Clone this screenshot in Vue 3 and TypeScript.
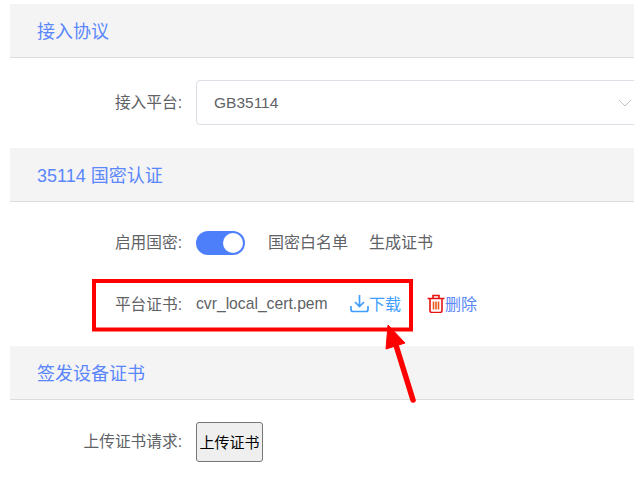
<script setup lang="ts">
const fontNote = 'cert form'
const enabled = true
</script>

<template>
  <div class="page" :data-name="fontNote">
    <section class="block">
      <h3 class="title">接入协议</h3>
      <div class="row first">
        <label class="label">接入平台:</label>
        <div class="select">
          <span class="value">GB35114</span>
          <svg class="chevron" width="14" height="8" viewBox="0 0 14 8">
            <path d="M1 1l6 6 6-6" fill="none" stroke="#c0c4cc" stroke-width="1" />
          </svg>
        </div>
      </div>
    </section>

    <section class="block">
      <h3 class="title">35114 国密认证</h3>
      <div class="row switch-row">
        <label class="label">启用国密:</label>
        <span class="switch" :class="{ on: enabled }"><i></i></span>
        <a class="plain white">国密白名单</a>
        <a class="plain">生成证书</a>
      </div>
      <div class="row cert-row">
        <label class="label">平台证书:</label>
        <span class="file">cvr_local_cert.pem</span>
        <a class="link download">
          <svg width="19" height="19" viewBox="0 0 19 19" fill="none" stroke="#409eff" stroke-width="1.7">
            <path d="M9.5 1v11M5 8l4.5 4.5L14 8" />
            <path d="M1 12v3.5a2 2 0 0 0 2 2h13a2 2 0 0 0 2-2V12" />
          </svg>下载
        </a>
        <a class="link remove">
          <svg width="18" height="19" viewBox="0 0 18 19" fill="none" stroke="#e5120f" stroke-width="1.6">
            <path d="M0.5 4.5h17M6 4.5V1.5h6v3" />
            <path d="M3 4.5v12a2 2 0 0 0 2 2h8a2 2 0 0 0 2-2v-12" />
            <path d="M6.5 7.5v8M9 7.5v8M11.5 7.5v8" stroke="#ea5a1e" />
          </svg>删除
        </a>
      </div>
    </section>

    <section class="block">
      <h3 class="title">签发设备证书</h3>
      <div class="row upload-row">
        <label class="label">上传证书请求:</label>
        <button class="upload" type="button">上传证书</button>
      </div>
    </section>

    <!-- red annotation drawn on top of the screenshot -->
    <svg class="annotation" width="634" height="493" viewBox="0 0 634 493">
      <rect x="94" y="281" width="317" height="48.5" fill="none" stroke="#ff0000" stroke-width="4" />
      <path d="M388 325L386 349L405 343Z" fill="#ff0000" stroke="#ff0000" stroke-width="1" stroke-linejoin="round" />
      <path d="M395 342L413 400" fill="none" stroke="#ff0000" stroke-width="5.5" stroke-linecap="round" />
    </svg>
  </div>
</template>

<style>
html,
body {
  margin: 0;
  overflow: hidden;
}
</style>

<style scoped>
.page {
  position: relative;
  width: 634px;
  height: 493px;
  overflow: hidden;
  box-sizing: border-box;
  padding: 4px 0 0 10px;
  background: #fff;
  font-family: "Liberation Sans", "Noto Sans CJK SC", sans-serif;
  font-size: 15px;
  color: #606266;
}
.block {
  margin: 0;
}
.title {
  margin: 0;
  height: 54px;
  box-sizing: border-box;
  padding-left: 27px;
  line-height: 56px;
  font-size: 18px;
  font-weight: 400;
  color: #5a87fb;
  background: #f4f4f5;
  border-bottom: 1px solid #dcdcdc;
}
.row {
  display: flex;
  align-items: center;
}
.label {
  width: 172px;
  flex: none;
  padding-bottom: 3px;
  text-align: right;
  font-size: 15.7px;
  white-space: nowrap;
}
.first {
  padding: 22px 0 23px;
}
.select {
  flex: none;
  width: 444px;
  height: 45px;
  margin-left: 14px;
  box-sizing: border-box;
  padding: 0 5px 0 17px;
  display: flex;
  align-items: center;
  justify-content: space-between;
  border: 1px solid #dcdfe6;
  border-radius: 4px;
  font-size: 15.5px;
}
.value {
  padding-top: 1px;
}
.chevron {
  margin-right: 2px;
}
.switch-row {
  height: 45px;
  padding-top: 18px;
}
.switch {
  flex: none;
  width: 49px;
  height: 24px;
  margin-left: 14px;
  border-radius: 12px;
  background: #4e7ffb;
  position: relative;
}
.switch i {
  position: absolute;
  top: 2px;
  right: 2px;
  width: 20px;
  height: 20px;
  border-radius: 50%;
  background: #fff;
}
.plain {
  font-size: 16px;
  margin-left: 21px;
  padding-bottom: 3px;
  white-space: nowrap;
}
.white {
  margin-left: 23px;
}
.cert-row {
  height: 45px;
  padding-top: 17px;
  padding-bottom: 19px;
}
.file {
  margin-left: 14px;
  width: 154px;
  flex: none;
  font-size: 15.7px;
  padding-bottom: 1px;
}
.link {
  display: flex;
  align-items: center;
  font-size: 16px;
  white-space: nowrap;
}
.download {
  color: #409eff;
  width: 77px;
  flex: none;
  padding-bottom: 3px;
}
.remove {
  color: #5a87fb;
  padding-bottom: 3px;
}
.upload-row {
  padding-top: 22px;
}
.upload {
  width: 67px;
  height: 40px;
  margin-left: 14px;
  padding: 0 0 2px;
  box-sizing: border-box;
  border: 1px solid #767676;
  border-radius: 3px;
  background: #efefef;
  color: #000;
  font-family: inherit;
  font-size: 15px;
}
.annotation {
  position: absolute;
  left: 0;
  top: 0;
  pointer-events: none;
}
</style>
